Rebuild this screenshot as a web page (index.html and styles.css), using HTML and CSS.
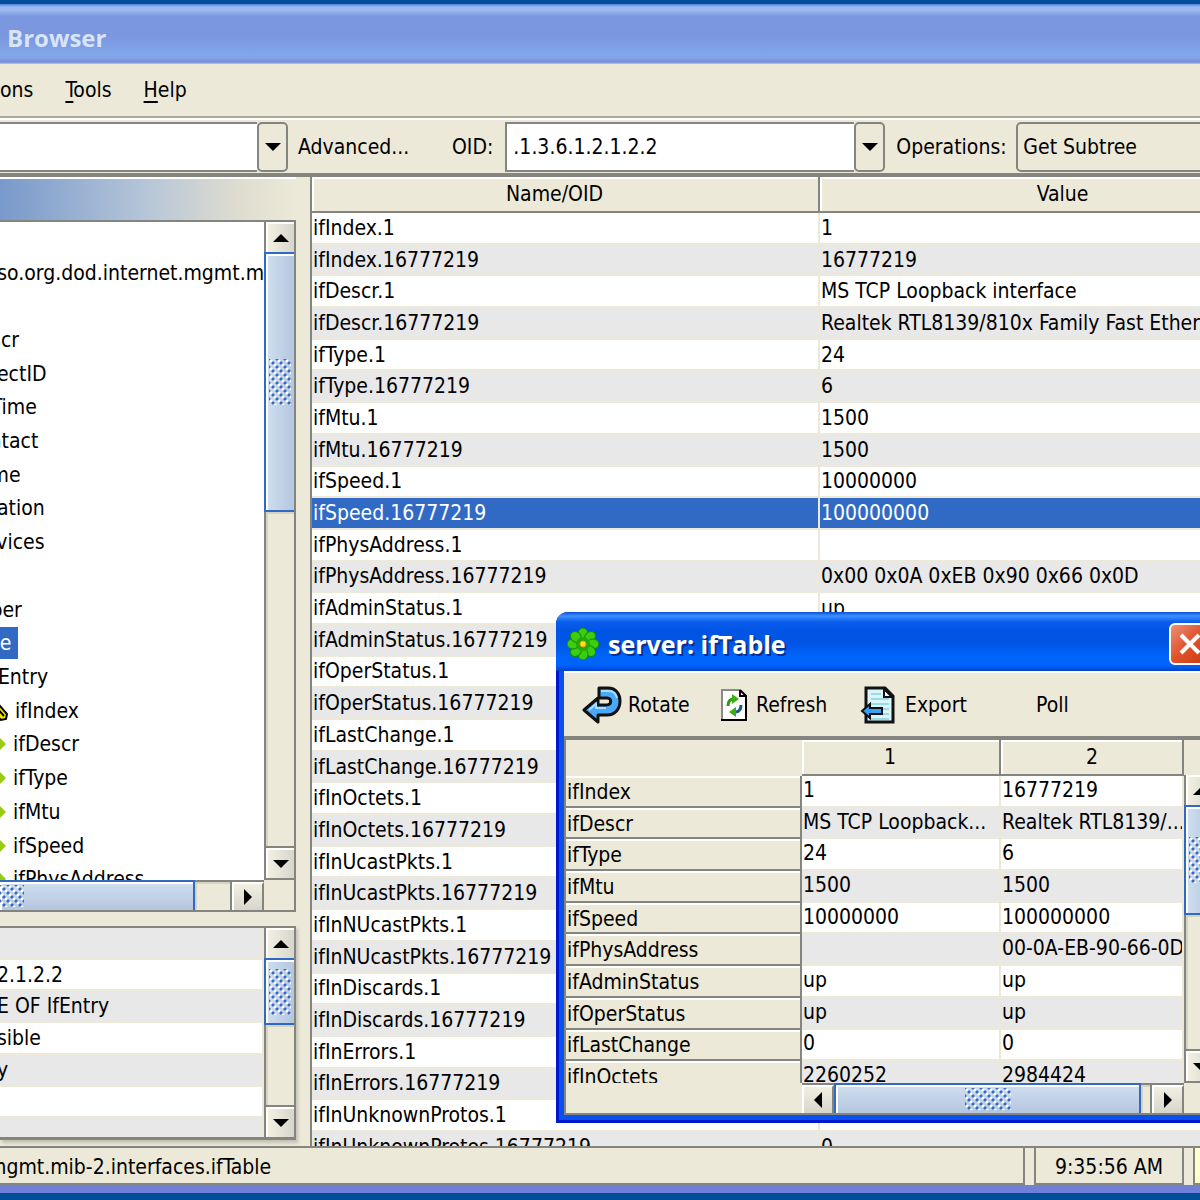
FILE: index.html
```html
<!DOCTYPE html>
<html lang="en">
<head>
    <meta charset="UTF-8">
    <title>MIB Browser</title>
    <link rel="stylesheet" href="styles.css">
</head>
<body>
    <header class="titlebar">Browser</header>

    <nav class="menubar">
        <button>ons</button>
        <button><u>T</u>ools</button>
        <button><u>H</u>elp</button>
    </nav>

    <div class="toolbar">
        <div class="combo combo-address">
            <input type="text" aria-label="Address">
            <button aria-label="Show addresses"><span class="arrow down"></span></button>
        </div>
        <button class="advanced">Advanced...</button>
        <label for="oid">OID:</label>
        <div class="combo combo-oid">
            <input type="text" id="oid" value=".1.3.6.1.2.1.2.2">
            <button aria-label="Show OIDs"><span class="arrow down"></span></button>
        </div>
        <label for="operation" class="operation-label">Operations:</label>
        <select id="operation">
            <option>Get Subtree</option>
        </select>
    </div>

    <main>
        <aside>
            <div class="panel-title"></div>
            <div class="tree-panel">
                <div class="tree-view">
                    <ul class="tree">
                        <li></li>
                        <li class="root">iso.org.dod.internet.mgmt.mib-2</li>
                        <li></li>
                        <li>sysDescr</li>
                        <li>sysObjectID</li>
                        <li>sysUpTime</li>
                        <li>sysContact</li>
                        <li>sysName</li>
                        <li>sysLocation</li>
                        <li>sysServices</li>
                        <li></li>
                        <li>ifNumber</li>
                        <li class="branch"><span class="selected">ifTable</span></li>
                        <li class="entry">ifEntry</li>
                        <li class="leaf">
                            <svg width="19" height="24" viewBox="0 0 19 24"><path d="M-6 3l4-3 13 15-1 5-5 1L-8 8z" fill="#f4e800" stroke="#000" stroke-width="2"/><path d="M0 8l8 9" stroke="#000" stroke-width="2"/></svg>ifIndex
                        </li>
                        <li class="leaf"><svg width="17" height="18" viewBox="0 0 17 18"><path d="M2 1l8 8-8 8-8-8z" fill="#9c1"/></svg>ifDescr</li>
                        <li class="leaf"><svg width="17" height="18" viewBox="0 0 17 18"><path d="M2 1l8 8-8 8-8-8z" fill="#9c1"/></svg>ifType</li>
                        <li class="leaf"><svg width="17" height="18" viewBox="0 0 17 18"><path d="M2 1l8 8-8 8-8-8z" fill="#9c1"/></svg>ifMtu</li>
                        <li class="leaf"><svg width="17" height="18" viewBox="0 0 17 18"><path d="M2 1l8 8-8 8-8-8z" fill="#9c1"/></svg>ifSpeed</li>
                        <li class="leaf"><svg width="17" height="18" viewBox="0 0 17 18"><path d="M2 1l8 8-8 8-8-8z" fill="#9c1"/></svg>ifPhysAddress</li>
                    </ul>
                </div>
                <div class="scroll vertical">
                    <button aria-label="Scroll up"><span class="arrow up"></span></button>
                    <div class="thumb tree-thumb"><span class="grip"></span></div>
                    <div class="track"></div>
                    <button aria-label="Scroll down"><span class="arrow down"></span></button>
                </div>
                <div class="scroll horizontal">
                    <div class="thumb tree-thumb-x"><span class="grip"></span></div>
                    <div class="track"></div>
                    <button aria-label="Scroll right"><span class="arrow right"></span></button>
                </div>
                <div class="corner"></div>
            </div>

            <div class="details-panel">
                <div class="details-view">
                    <table class="rows details">
                        <tbody>
                            <tr><td></td></tr>
                            <tr><td>2.1.2.2</td></tr>
                            <tr><td>E OF IfEntry</td></tr>
                            <tr><td>sible</td></tr>
                            <tr><td>y</td></tr>
                            <tr><td></td></tr>
                            <tr><td></td></tr>
                        </tbody>
                    </table>
                </div>
                <div class="scroll vertical">
                    <button aria-label="Scroll up"><span class="arrow up"></span></button>
                    <div class="thumb details-thumb"><span class="grip"></span></div>
                    <div class="track"></div>
                    <button aria-label="Scroll down"><span class="arrow down"></span></button>
                </div>
            </div>
        </aside>

        <section class="results">
            <table class="rows result-table">
                <thead>
                    <tr><th class="col-name">Name/OID</th><th>Value</th></tr>
                </thead>
                <tbody>
                    <tr><td>ifIndex.1</td><td>1</td></tr>
                    <tr><td>ifIndex.16777219</td><td>16777219</td></tr>
                    <tr><td>ifDescr.1</td><td>MS TCP Loopback interface</td></tr>
                    <tr><td>ifDescr.16777219</td><td>Realtek RTL8139/810x Family Fast Ethernet</td></tr>
                    <tr><td>ifType.1</td><td>24</td></tr>
                    <tr><td>ifType.16777219</td><td>6</td></tr>
                    <tr><td>ifMtu.1</td><td>1500</td></tr>
                    <tr><td>ifMtu.16777219</td><td>1500</td></tr>
                    <tr><td>ifSpeed.1</td><td>10000000</td></tr>
                    <tr class="selected"><td>ifSpeed.16777219</td><td>100000000</td></tr>
                    <tr><td>ifPhysAddress.1</td><td></td></tr>
                    <tr><td>ifPhysAddress.16777219</td><td>0x00 0x0A 0xEB 0x90 0x66 0x0D</td></tr>
                    <tr><td>ifAdminStatus.1</td><td>up</td></tr>
                    <tr><td>ifAdminStatus.16777219</td><td></td></tr>
                    <tr><td>ifOperStatus.1</td><td></td></tr>
                    <tr><td>ifOperStatus.16777219</td><td></td></tr>
                    <tr><td>ifLastChange.1</td><td></td></tr>
                    <tr><td>ifLastChange.16777219</td><td></td></tr>
                    <tr><td>ifInOctets.1</td><td></td></tr>
                    <tr><td>ifInOctets.16777219</td><td></td></tr>
                    <tr><td>ifInUcastPkts.1</td><td></td></tr>
                    <tr><td>ifInUcastPkts.16777219</td><td></td></tr>
                    <tr><td>ifInNUcastPkts.1</td><td></td></tr>
                    <tr><td>ifInNUcastPkts.16777219</td><td></td></tr>
                    <tr><td>ifInDiscards.1</td><td></td></tr>
                    <tr><td>ifInDiscards.16777219</td><td></td></tr>
                    <tr><td>ifInErrors.1</td><td></td></tr>
                    <tr><td>ifInErrors.16777219</td><td></td></tr>
                    <tr><td>ifInUnknownProtos.1</td><td></td></tr>
                    <tr><td>ifInUnknownProtos.16777219</td><td>0</td></tr>
                </tbody>
            </table>
        </section>
    </main>

    <footer class="statusbar">
        <div class="status-path">mgmt.mib-2.interfaces.ifTable</div>
        <div class="status-time">9:35:56 AM</div>
        <div class="status-memory"></div>
    </footer>

    <div class="dialog" role="dialog" aria-labelledby="dialog-title">
        <div class="dialog-title">
            <svg width="32" height="32" viewBox="-16 -16 32 32">
                <g fill="#3ccc10" stroke="#128a0a">
                    <ellipse cy="-10" rx="5" ry="6"/>
                    <ellipse cy="-10" rx="5" ry="6" transform="rotate(45)"/>
                    <ellipse cy="-10" rx="5" ry="6" transform="rotate(90)"/>
                    <ellipse cy="-10" rx="5" ry="6" transform="rotate(135)"/>
                    <ellipse cy="-10" rx="5" ry="6" transform="rotate(180)"/>
                    <ellipse cy="-10" rx="5" ry="6" transform="rotate(225)"/>
                    <ellipse cy="-10" rx="5" ry="6" transform="rotate(270)"/>
                    <ellipse cy="-10" rx="5" ry="6" transform="rotate(315)"/>
                </g>
                <circle r="7" fill="#23a80c"/>
                <circle r="3" fill="#ffe11a" stroke="#e89a10"/>
            </svg>
            <span id="dialog-title">server: ifTable</span>
            <button class="close" aria-label="Close">
                <svg width="24" height="24" viewBox="0 0 24 24"><path d="M3 3l18 18M21 3L3 21" stroke="#fff" stroke-width="4"/></svg>
            </button>
        </div>
        <div class="dialog-toolbar">
            <button class="tool-rotate">
                <svg width="40" height="40" viewBox="0 0 40 40">
                    <path d="M17 3h9c8 0 12 6 12 13 0 8-5 14-13 14h-9v7L2 25l14-12v7h8c6 0 6-7 1-7h-8z" fill="#4aa8fa" stroke="#111" stroke-width="3" stroke-linejoin="round"/>
                    <path d="M19 6h8c4 0 7 3 8 7M7 25l7-6v4h10" fill="none" stroke="#a9dcff" stroke-width="2"/>
                </svg>
                Rotate
            </button>
            <button class="tool-refresh">
                <svg width="28" height="34" viewBox="0 0 28 34">
                    <path d="M2 2h18l6 6v24H2z" fill="#fff"/>
                    <path d="M2 32V2h18" fill="none" stroke="#8a8a8a" stroke-width="2"/>
                    <path d="M20 2l6 6v24H1M20 2v6h6" fill="none" stroke="#000" stroke-width="2"/>
                    <path d="M8 18c0-5 2-7 6-7" fill="none" stroke="#2e9a12" stroke-width="3"/>
                    <path d="M12 6l7 5-7 5z" fill="#3aae14"/>
                    <path d="M21 17c0 5-2 7-6 7" fill="none" stroke="#1e5a8a" stroke-width="3"/>
                    <path d="M16 19l-7 5 7 5z" fill="#3aae14"/>
                </svg>
                Refresh
            </button>
            <button class="tool-export">
                <svg width="38" height="40" viewBox="0 0 38 40">
                    <path d="M6 3h19l8 8v26H6z" fill="#d9f6fb" stroke="#111" stroke-width="3"/>
                    <path d="M11 9h10M11 14h18M11 19h18M20 24h9M20 29h9M11 34h18" stroke="#9fd8e6" stroke-width="2"/>
                    <path d="M24 4v8h8z" fill="#fff" stroke="#111" stroke-width="2"/>
                    <path d="M2 26l8-7v4h12v6H10v4z" fill="#3aa0f5" stroke="#111" stroke-width="2"/>
                </svg>
                Export
            </button>
            <button>Poll</button>
        </div>
        <div class="dialog-grid">
            <div class="dialog-view">
                <table class="rows if-table">
                    <thead>
                        <tr><td class="col-label"></td><th class="col-first">1</th><th>2</th></tr>
                    </thead>
                    <tbody>
                        <tr><th>ifIndex</th><td>1</td><td>16777219</td></tr>
                        <tr><th>ifDescr</th><td>MS TCP Loopback...</td><td>Realtek RTL8139/...</td></tr>
                        <tr><th>ifType</th><td>24</td><td>6</td></tr>
                        <tr><th>ifMtu</th><td>1500</td><td>1500</td></tr>
                        <tr><th>ifSpeed</th><td>10000000</td><td>100000000</td></tr>
                        <tr><th>ifPhysAddress</th><td></td><td>00-0A-EB-90-66-0D</td></tr>
                        <tr><th>ifAdminStatus</th><td>up</td><td>up</td></tr>
                        <tr><th>ifOperStatus</th><td>up</td><td>up</td></tr>
                        <tr><th>ifLastChange</th><td>0</td><td>0</td></tr>
                        <tr><th>ifInOctets</th><td>2260252</td><td>2984424</td></tr>
                    </tbody>
                </table>
            </div>
            <div class="scroll vertical">
                <button aria-label="Scroll up"><span class="arrow up"></span></button>
                <div class="thumb dialog-thumb"><span class="grip"></span></div>
                <div class="track"></div>
                <button aria-label="Scroll down"><span class="arrow down"></span></button>
            </div>
            <div class="scroll horizontal">
                <button aria-label="Scroll left"><span class="arrow left"></span></button>
                <div class="thumb dialog-thumb-x"><span class="grip"></span></div>
                <div class="track"></div>
                <button aria-label="Scroll right"><span class="arrow right"></span></button>
            </div>
        </div>
    </div>
</body>
</html>
```

FILE: styles.css
```css
* {
    box-sizing: border-box;
}

body {
    margin: 0;
    height: 100vh;
    display: flex;
    flex-direction: column;
    overflow: hidden;
    border-top: 4px solid #004e98;
    border-bottom: 7px solid #004e98;
    background-color: #ece9d8;
    color: #000000;
    font-family: "DejaVu Sans Condensed", "Noto Sans", sans-serif;
    font-size: 21px;
}

button,
input,
select {
    margin: 0;
    padding: 0;
    border: none;
    background: none;
    color: inherit;
    font: inherit;
}

.titlebar {
    height: 60px;
    flex: none;
    padding: 2px 7px 0;
    line-height: 64px;
    background: linear-gradient(#4f7be0 0, #9db9f0 3px, #9db9f0 6px, #7b98e0 12px, #7996de 32px, #82a6ea 50px, #82a6ea 54px, #728ade 58px, #c0c8e0 60px);
    color: #d8e4f8;
    font-family: "Open Sans", "Noto Sans", sans-serif;
    font-size: 24px;
    font-weight: bold;
}

.menubar {
    height: 54px;
    flex: none;
    display: flex;
    align-items: center;
    gap: 32px;
    border-bottom: 2px solid #aca899;
}

.menubar u {
    text-underline-offset: 4px;
    text-decoration-thickness: 2px;
}

/* Toolbar */
.toolbar {
    height: 59px;
    flex: none;
    display: flex;
    align-items: center;
    border-top: 2px solid #ffffff;
    border-bottom: 4px solid #85857f;
    overflow: hidden;
}

.toolbar > * {
    flex: none;
}

.combo {
    height: 50px;
    display: flex;
}

.combo input {
    flex: 1;
    min-width: 0;
    padding-left: 6px;
    border: 2px solid #85857f;
    border-right: none;
    background-color: #ffffff;
}

.combo-address input {
    border-left: none;
}

.combo button {
    width: 31px;
    display: flex;
    align-items: center;
    justify-content: center;
    border: 2px solid #85857f;
    border-radius: 5px;
}

.combo-address {
    width: 288px;
    margin-right: 10px;
}

.combo-oid {
    width: 380px;
    margin: 0 11px 0 12px;
}

.advanced {
    width: 154px;
    text-align: left;
}

.operation-label {
    width: 120px;
}

select {
    height: 50px;
    width: 260px;
    padding-left: 5px;
    border: 2px solid #85857f;
    border-radius: 5px;
    appearance: none;
}

/* Scroll bars */
.arrow {
    border: 8px solid transparent;
}

.arrow.up {
    border-top: none;
    border-bottom-color: #000000;
}

.arrow.down {
    border-bottom: none;
    border-top-color: #000000;
}

.arrow.left {
    border-left: none;
    border-right-color: #000000;
}

.arrow.right {
    border-right: none;
    border-left-color: #000000;
}

.scroll {
    display: flex;
    background-color: #ece9d8;
}

.scroll.vertical {
    flex-direction: column;
    width: 32px;
    border-left: 2px solid #85857f;
    border-right: 2px solid #85857f;
}

.scroll.horizontal {
    height: 30px;
    border-top: 2px solid #85857f;
}

.scroll button {
    height: 30px;
    flex: none;
    display: flex;
    align-items: center;
    justify-content: center;
    border: 2px solid #ffffff;
    border-right: none;
    border-bottom: none;
    background: linear-gradient(90deg, #f2efe2, #d8d6cc);
}

.scroll.horizontal button {
    height: 28px;
    width: 32px;
    border-right: 2px solid #85857f;
    background: linear-gradient(#f2efe2, #d8d6cc);
}

.track {
    flex: 1;
    box-shadow: inset 2px 2px #d6d3c4;
}

.vertical .track {
    border-bottom: 2px solid #85857f;
}

.horizontal .track {
    border-right: 2px solid #85857f;
}

.thumb {
    flex: none;
    display: flex;
    align-items: center;
    justify-content: center;
    border: 2px solid #316ac5;
    box-shadow: inset 2px 2px #ffffff;
    background: linear-gradient(90deg, #d0deee, #b4c6e0);
}

.vertical .thumb {
    margin-left: -2px;
    border-right: none;
}

.horizontal .thumb {
    margin-top: -2px;
    border-bottom: none;
    background: linear-gradient(#d0deee, #b4c6e0);
}

.grip {
    width: 22px;
    height: 46px;
    flex: none;
    background-image:
        radial-gradient(circle at 4px 4px, #316ac5 1px, transparent 2px),
        radial-gradient(circle at 4px 4px, #316ac5 1px, transparent 2px),
        radial-gradient(circle at 4px 4px, #ffffff 1px, transparent 2px),
        radial-gradient(circle at 4px 4px, #ffffff 1px, transparent 2px);
    background-position: 0 0, 4px 4px, -2px -2px, 2px 2px;
    background-size: 8px 8px;
}

.horizontal .grip {
    width: 46px;
    height: 22px;
}

.tree-thumb {
    height: 260px;
}

.horizontal .tree-thumb-x {
    width: 195px;
    justify-content: flex-start;
    border-left: none;
}

.tree-thumb-x .grip {
    width: 24px;
}

.details-thumb {
    height: 67px;
}

/* Left side */
main {
    flex: 1;
    min-height: 0;
    display: flex;
}

aside {
    width: 296px;
    flex: none;
    display: flex;
    flex-direction: column;
    margin-bottom: 6px;
    border-top: 2px solid #ffffff;
}

.panel-title {
    height: 43px;
    flex: none;
    background: linear-gradient(90deg, #7899cb, #b7c6d8 50%, #dedccf 80%, #ece9d8);
    border-bottom: 2px solid #85857f;
}

.tree-panel {
    flex: 1;
    min-height: 0;
    display: grid;
    grid-template-columns: minmax(0, 1fr) 32px;
    grid-template-rows: minmax(0, 1fr) 30px;
    border-bottom: 2px solid #85857f;
}

.tree-view {
    overflow: hidden;
    background-color: #ffffff;
}

.tree-panel .vertical {
    border-bottom: 2px solid #85857f;
}

.corner {
    border-right: 2px solid #85857f;
}

.tree {
    height: 674px;
    display: flex;
    flex-direction: column;
    margin: 0;
    padding: 0;
    list-style: none;
}

.tree li {
    flex: 1;
    display: flex;
    align-items: center;
    margin-left: -66px;
    white-space: nowrap;
}

.tree .root {
    margin-left: -8px;
}

.tree .branch {
    margin-left: -56px;
}

.tree .entry {
    margin-left: -14px;
}

.tree .leaf {
    margin-left: -4px;
}

.tree .selected {
    padding: 4px 7px;
}

.leaf svg {
    flex: none;
    overflow: visible;
}

.selected {
    background-color: #316ac5;
    color: #ffffff;
}

.details-panel {
    height: 214px;
    flex: none;
    display: grid;
    grid-template-columns: minmax(0, 1fr) 32px;
    grid-template-rows: minmax(0, 1fr);
    margin-top: 14px;
    border-top: 2px solid #85857f;
    border-bottom: 3px solid #85857f;
    box-shadow: 2px 3px 3px #c4c1b4;
}

.details-view {
    overflow: hidden;
}

/* Tables */
.rows {
    border-spacing: 0;
    table-layout: fixed;
    background-color: #ffffff;
}

.rows th,
.rows td {
    height: 30px;
    padding: 0 0 0 1px;
    line-height: 26px;
    font-weight: normal;
    text-align: left;
    white-space: nowrap;
    overflow: hidden;
}

.rows tbody td {
    border-bottom: 2px solid #ece9d8;
    border-right: 2px solid #ece9d8;
}

.rows tbody tr:nth-child(even) {
    background-color: #e8e8e8;
}

.rows thead th {
    height: 36px;
    border-right: 2px solid #85857f;
    border-bottom: 2px solid #85857f;
    box-shadow: inset 2px 2px #ffffff;
    background-color: #ece9d8;
    text-align: center;
}

.rows thead .col-name,
.rows thead .col-first {
    padding-right: 22px;
}

.details {
    width: 100%;
    height: 222px;
    text-indent: -4px;
}

.details tbody tr:nth-child(odd) {
    background-color: #e8e8e8;
}

.details tbody tr:nth-child(even) {
    background-color: #ffffff;
}

.results {
    flex: 1;
    min-width: 0;
    overflow: hidden;
    margin-left: 14px;
    border-left: 2px solid #85857f;
    background-color: #ffffff;
}

.result-table {
    width: 994px;
    height: 987px;
}

.col-name {
    width: 508px;
}

.rows tbody tr.selected {
    background-color: #316ac5;
}

/* Status bar */
.statusbar {
    height: 47px;
    flex: none;
    display: flex;
    gap: 9px;
    border-top: 2px solid #85857f;
    border-bottom: 8px solid #7080d8;
}

.statusbar div {
    line-height: 38px;
    border: 2px solid #85857f;
    border-top: none;
    white-space: nowrap;
    overflow: hidden;
}

.statusbar .status-path {
    flex: 1;
    border-left: none;
    text-indent: -12px;
}

.statusbar .status-time {
    width: 150px;
    text-align: center;
}

.statusbar .status-memory {
    width: 7px;
    border-right: none;
    background-color: #ffffcc;
}

/* ifTable window */
.dialog {
    position: absolute;
    top: 612px;
    left: 556px;
    right: -24px;
    padding: 0 5px 5px;
    border: 3px solid #0019cf;
    border-top: none;
    border-radius: 12px 12px 0 0;
    background-color: #0a50ee;
}

.dialog-title {
    height: 59px;
    display: flex;
    align-items: center;
    gap: 9px;
    margin: 0 -8px;
    padding: 4px 13px 0 11px;
    border-radius: 12px 12px 0 0;
    background: linear-gradient(#0a4fd8 0, #3c90ff 4px, #0a5cec 10px, #0054e3 20px, #0055e5 32px, #0066ff 46px, #0062fa 54px, #0040c8 59px);
    color: #ffffff;
    font-family: "Open Sans", "Noto Sans", sans-serif;
    font-size: 25px;
    font-weight: bold;
    text-shadow: 2px 2px #0a2f8c;
}

.close {
    width: 42px;
    height: 42px;
    display: flex;
    align-items: center;
    justify-content: center;
    margin-left: auto;
    border: 2px solid #ffffff;
    border-radius: 6px;
    background: linear-gradient(135deg, #ec9078, #e0502a 50%, #c83a10);
}

.dialog-toolbar {
    height: 69px;
    display: flex;
    align-items: center;
    border-top: 2px solid #ffffff;
    border-bottom: 4px solid #85857f;
    padding-left: 18px;
    background-color: #ece9d8;
}

.dialog-toolbar button {
    display: flex;
    align-items: center;
}

.tool-rotate {
    width: 138px;
    gap: 6px;
}

.tool-refresh {
    width: 140px;
    gap: 8px;
}

.tool-export {
    width: 176px;
    gap: 7px;
}

.dialog-grid {
    display: grid;
    grid-template-columns: minmax(0, 1fr) 32px;
    grid-template-rows: 343px 30px;
    border-left: 2px solid #85857f;
    border-bottom: 2px solid #85857f;
    background-color: #ece9d8;
}

.dialog-view {
    overflow: hidden;
}

.if-table {
    width: 100%;
    height: 353px;
}

.col-label {
    width: 236px;
    background-color: #ece9d8;
}

.col-first {
    width: 199px;
}

.if-table tbody th {
    padding-top: 2px;
    border-right: 2px solid #85857f;
    border-bottom: 2px solid #85857f;
    box-shadow: inset 0 2px #ffffff;
    background-color: #ece9d8;
}

.if-table tbody td {
    padding-bottom: 2px;
}

.dialog-grid .vertical {
    margin-top: 35px;
    border-bottom: 2px solid #85857f;
}

.dialog-grid .horizontal {
    margin-left: 236px;
}

.dialog-thumb {
    height: 110px;
}

.dialog-thumb-x {
    width: 307px;
}
```
